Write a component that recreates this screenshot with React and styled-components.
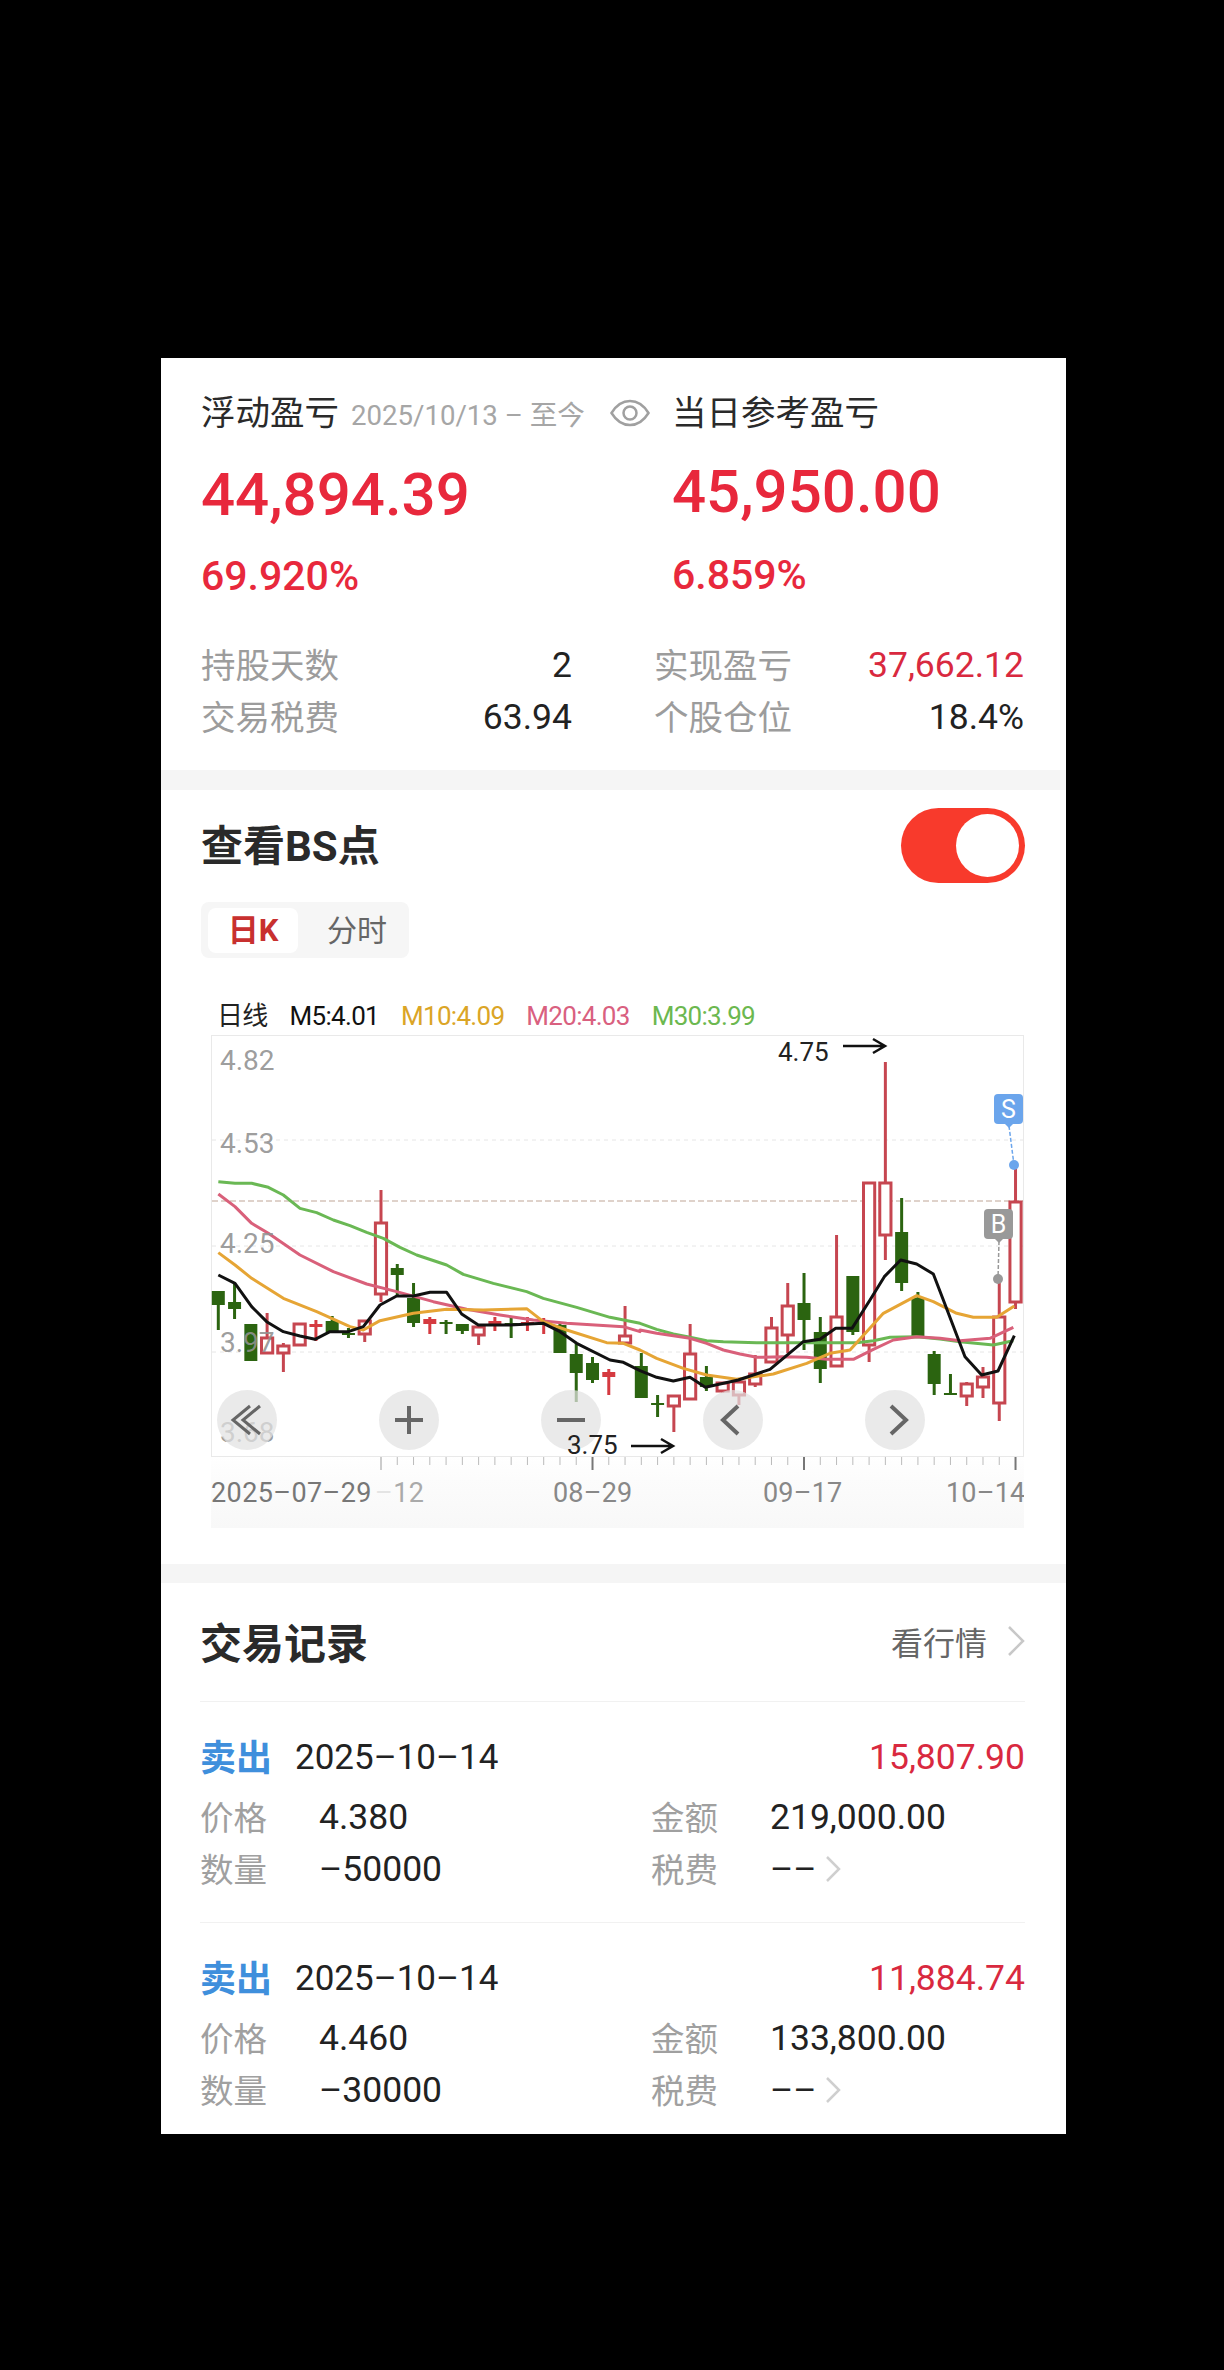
import styled, { createGlobalStyle } from 'styled-components';

const GlobalStyle = createGlobalStyle`
  html, body { margin: 0; padding: 0; background: #000; }
  * { box-sizing: border-box; }
`;

const FONT = `Roboto, "Noto Sans CJK SC", sans-serif`;
const RED = '#e8283c';

const Page = styled.div`
  min-height: 2370px;
  background: #000;
  padding: 358px 0 0 161px;
  font-family: ${FONT};
`;

const Panel = styled.div`
  width: 905px;
  height: 1776px;
  background: #fff;
  display: flex;
  flex-direction: column;
`;

const Section = styled.section`
  padding: ${({ $top }) => $top}px 41px ${({ $bottom }) => $bottom}px ${({ $left }) => $left || 40}px;
`;

const Gap = styled.div`
  height: ${({ $h }) => $h}px;
  background: #f5f5f5;
`;

const SummaryGrid = styled.div`
  display: grid;
  grid-template-columns: 471px 1fr;
`;

const HeadCell = styled.div`
  display: flex;
  align-items: center;
  height: 40px;
`;

const HeadTitle = styled.span`
  font-size: 34.5px;
  line-height: 40px;
  color: #2a2a2a;
  white-space: nowrap;
`;

const DateRange = styled.span`
  font-size: 27.6px;
  line-height: 40px;
  color: #a6a6a6;
  margin: 5px 0 0 12px;
  white-space: nowrap;
`;

const EyeIcon = styled.svg`
  width: 40px;
  height: 28px;
  margin-left: 25px;
  flex: none;
`;

const BigNumber = styled.div`
  font-size: 60px;
  font-weight: 500;
  line-height: 70px;
  color: ${RED};
  margin-top: ${({ $raised }) => ($raised ? 24 : 27)}px;
`;

const Percent = styled.div`
  font-size: 41px;
  font-weight: 500;
  line-height: 50px;
  color: ${RED};
  margin-top: ${({ $raised }) => ($raised ? 23 : 21)}px;
`;

const StatsGrid = styled.div`
  display: grid;
  grid-template-columns: 371px 370px;
  column-gap: 82px;
  margin-top: 38px;
`;

const StatRow = styled.div`
  display: flex;
  justify-content: space-between;
  align-items: center;
  height: 52px;
`;

const StatLabel = styled.span`
  font-size: 34.5px;
  color: #9c9c9c;
  margin-bottom: 4px;
`;

const StatValue = styled.span`
  font-size: 35.5px;
  color: ${({ $red }) => ($red ? '#d9293f' : '#222')};
`;

const SectionHead = styled.div`
  display: flex;
  justify-content: space-between;
  align-items: center;
  height: ${({ $h }) => $h}px;
`;

const SectionTitle = styled.h2`
  margin: 0 0 6px;
  font-size: 42px;
  font-weight: 700;
  color: #2a2a2a;
`;

const Toggle = styled.div`
  width: 124px;
  height: 75px;
  border-radius: 38px;
  background: #f83a2c;
  display: flex;
  align-items: center;
  justify-content: flex-end;
  padding-right: 6px;
`;

const Knob = styled.div`
  width: 63px;
  height: 63px;
  border-radius: 50%;
  background: #fff;
`;

const Tabs = styled.div`
  display: flex;
  align-items: center;
  width: 208px;
  height: 56px;
  margin-top: 19px;
  padding: 0 0 0 7px;
  border-radius: 8px;
  background: #f6f6f6;
`;

const Tab = styled.div`
  width: ${({ $active }) => ($active ? 90 : 102)}px;
  height: 45px;
  margin-left: ${({ $active }) => ($active ? 0 : 8)}px;
  line-height: 45px;
  text-align: center;
  border-radius: 8px;
  font-size: ${({ $active }) => ($active ? 31 : 30)}px;
  font-weight: ${({ $active }) => ($active ? 700 : 400)};
  background: ${({ $active }) => ($active ? '#fff' : 'transparent')};
  color: ${({ $active }) => ($active ? '#c8302f' : '#666')};
`;

const Legend = styled.div`
  display: flex;
  gap: 22px;
  height: 34px;
  line-height: 34px;
  margin: 41px 0 0 16px;
  font-size: 26px;
  letter-spacing: -0.7px;
`;

const LegendItem = styled.span`
  color: ${({ $color }) => $color};
`;

const ChartWrap = styled.div`
  position: relative;
  width: 813px;
  height: 493px;
  margin: 2px 0 0 10px;
  background: linear-gradient(#fff 85%, #fcfcfc 90%, #f8f8f8);
`;

const ChartSvg = styled.svg`
  position: absolute;
  inset: 0;
  display: block;
`;

const ChartButtons = styled.div`
  position: absolute;
  left: 6px;
  top: 355px;
  display: flex;
  gap: 102px;
`;

const RoundButton = styled.div`
  width: 60px;
  height: 60px;
  border-radius: 50%;
  background: rgba(226, 226, 226, 0.72);
  svg { display: block; }
`;

const MoreLink = styled.div`
  display: flex;
  align-items: center;
  gap: 20px;
  font-size: 32px;
  color: #666;
  margin-bottom: 4px;
`;

const Chevron = styled.svg`
  width: ${({ $w }) => $w}px;
  height: ${({ $h }) => $h}px;
  flex: none;
`;

const HeadSpacer = styled.div`
  height: 33px;
`;

const Trade = styled.div`
  border-top: 1px solid #f1f1f1;
  padding: 35px 0 ${({ $bottom }) => $bottom}px;
`;

const TradeHead = styled.div`
  display: flex;
  align-items: center;
  height: 40px;
  margin-bottom: 14px;
`;

const Side = styled.span`
  font-size: 36px;
  font-weight: 700;
  color: #3f8fdc;
  margin-bottom: 5px;
`;

const TradeDate = styled.span`
  font-size: 35px;
  color: #222;
  margin-left: 23px;
`;

const Profit = styled.span`
  font-size: 35.5px;
  color: #d9293f;
  margin-left: auto;
`;

const Fields = styled.div`
  display: grid;
  grid-template-columns: 451px 1fr;
`;

const Field = styled.div`
  display: flex;
  align-items: center;
  height: 52px;
`;

const FieldLabel = styled.span`
  width: 119px;
  font-size: 33.5px;
  color: #a0a0a0;
  margin-bottom: 4px;
`;

const FieldValue = styled.span`
  font-size: 35.5px;
  color: #222;
`;

const MoreChevron = styled(Chevron)`
  margin-left: 8px;
`;

// --- chart data, in the picture's own pixels ---
const xOf = (i) => 218.3 + 16.27 * i;
const top = (pts) => pts.map(([x, y]) => [200 + x / 3, 1030 + y / 3]);
const low = (pts) => pts.map(([x, y]) => [200 + x / 3, 1300 + y / 3]);
const rTop = (pts) => pts.map(([x, y]) => [640 + x / 3, 1030 + y / 3]);
const rLow = (pts) => pts.map(([x, y]) => [640 + x / 3, 1300 + y / 3]);

// kind, body top, body bottom, wick top, wick bottom
const CANDLES = [
  ['g', 1291, 1305, 1291, 1330], ['g', 1302, 1309, 1283, 1319], ['g', 1324, 1361, 1324, 1361],
  ['r', 1338, 1353, 1313, 1353], ['r', 1346, 1353, 1343, 1372], ['r', 1324, 1345, 1324, 1345],
  ['f', 1324, 1327, 1320, 1341], ['g', 1321, 1332, 1316, 1332], ['g', 1333, 1335, 1328, 1338],
  ['r', 1321, 1334, 1321, 1342], ['r', 1223, 1294, 1190, 1302], ['g', 1268, 1275, 1264, 1297],
  ['g', 1298, 1323, 1283, 1327], ['f', 1319, 1324, 1317, 1334], ['g', 1322, 1323, 1320, 1334],
  ['g', 1324, 1331, 1324, 1334], ['r', 1327, 1335, 1325, 1345], ['f', 1321, 1324, 1317, 1331],
  ['g', 1323, 1324, 1318, 1338], ['f', 1322, 1323, 1317, 1331], ['f', 1323, 1324, 1318, 1334],
  ['g', 1325, 1353, 1322, 1353], ['g', 1354, 1373, 1343, 1402], ['g', 1363, 1380, 1357, 1383],
  ['f', 1372, 1377, 1369, 1395], ['r', 1336, 1343, 1306, 1343], ['g', 1366, 1398, 1353, 1398],
  ['g', 1403, 1405, 1395, 1417], ['r', 1396, 1406, 1396, 1432], ['r', 1354, 1399, 1324, 1399],
  ['g', 1377, 1387, 1366, 1391], ['r', 1383, 1391, 1382, 1393], ['r', 1382, 1395, 1382, 1405],
  ['r', 1374, 1384, 1355, 1387], ['r', 1328, 1362, 1317, 1362], ['r', 1306, 1335, 1283, 1353],
  ['g', 1303, 1320, 1273, 1350], ['g', 1332, 1369, 1317, 1383], ['r', 1317, 1366, 1235, 1366],
  ['g', 1276, 1332, 1276, 1335], ['r', 1183, 1345, 1183, 1362], ['r', 1183, 1235, 1062, 1260],
  ['g', 1232, 1283, 1198, 1291], ['g', 1298, 1336, 1292, 1336], ['g', 1354, 1384, 1351, 1395],
  ['g', 1393, 1395, 1374, 1395], ['r', 1384, 1396, 1382, 1406], ['r', 1377, 1387, 1367, 1398],
  ['r', 1317, 1403, 1280, 1421], ['r', 1202, 1302, 1165, 1309],
];

const LINES = [
  {
    color: '#6ab854',
    pts: [
      ...top([[55, 455], [105, 460], [155, 460], [205, 472], [250, 495], [300, 535], [350, 548], [400, 570], [450, 587], [500, 607], [550, 625], [600, 652], [650, 675], [740, 705], [790, 733], [880, 760], [980, 785], [1030, 805], [1130, 832], [1230, 862], [1320, 880]]),
      ...rLow([[0, 70], [50, 88], [100, 102], [150, 112], [200, 122], [250, 125], [350, 128], [500, 128], [650, 128], [700, 122], [750, 112], [830, 110], [900, 117], [960, 125], [1060, 135], [1120, 122]]),
    ],
  },
  {
    color: '#d9607a',
    pts: [
      ...top([[55, 492], [105, 530], [155, 580], [205, 610], [300, 675], [400, 725], [500, 762], [590, 785], [700, 815], [800, 838], [900, 855], [1000, 870], [1100, 880], [1270, 890], [1320, 905]]),
      ...rLow([[0, 90], [50, 100], [150, 115], [200, 130], [250, 150], [300, 162], [350, 172], [430, 170], [500, 172], [560, 178], [640, 178], [700, 148], [760, 120], [830, 110], [900, 115], [960, 122], [1050, 115], [1120, 82]]),
    ],
  },
  {
    color: '#e6a535',
    pts: [
      ...top([[55, 668], [105, 705], [155, 745], [250, 805], [350, 845], [450, 890]]),
      ...low([[490, 90], [540, 62], [640, 40], [740, 28], [850, 30], [980, 26], [1030, 65], [1100, 90], [1220, 128], [1270, 130], [1320, 150]]),
      ...rLow([[50, 175], [130, 205], [200, 225], [290, 238], [400, 222], [500, 190], [570, 160], [630, 150], [680, 95], [730, 40]]),
      ...rTop([[830, 797], [880, 815], [950, 850], [1000, 862], [1070, 862], [1123, 828]]),
    ],
  },
  {
    color: '#111',
    pts: [
      ...top([[55, 735], [105, 760], [155, 830], [200, 875]]),
      ...low([[250, 95], [300, 108], [345, 118], [390, 95], [445, 95], [490, 80], [540, 15]]),
      ...top([[590, 798], [640, 798], [690, 787], [740, 787], [785, 852], [835, 885], [930, 885], [1030, 880]]),
      ...low([[1080, 95], [1130, 130], [1230, 180], [1270, 187], [1320, 212]]),
      ...rLow([[50, 232], [100, 243], [150, 232], [196, 262], [295, 240], [390, 208], [490, 125], [540, 118], [587, 85], [636, 85], [690, 0]]),
      ...rTop([[733, 740], [782, 690], [830, 702], [880, 732]]),
      ...rLow([[910, 0], [975, 170], [1025, 225], [1074, 213], [1123, 107]]),
    ],
  },
];

const VIEW = '211 1035 813 493';
const AXIS = [['4.82', 1060], ['4.53', 1143], ['4.25', 1243], ['3.97', 1342], ['3.68', 1432]];
const GRID = [1140, 1246, 1352];
const DATES = [['08–29', 553], ['09–17', 763], ['10–14', 946]];

const Candle = ({ i, kind, bodyTop, bodyBot, wickTop, wickBot }) => {
  const x = xOf(i);
  const color = kind === 'g' ? '#2b6410' : kind === 'f' ? '#d53a40' : '#c64650';
  const hollow = kind === 'r';
  return (
    <g>
      <line x1={x} x2={x} y1={wickTop} y2={wickBot} stroke={color} strokeWidth="3" />
      <rect
        x={x - (hollow ? 5.6 : 6.5)}
        y={bodyTop}
        width={hollow ? 11.2 : 13}
        height={Math.max(bodyBot - bodyTop, 2)}
        fill={hollow ? '#fff' : color}
        stroke={hollow ? color : 'none'}
        strokeWidth={hollow ? 3 : 0}
      />
    </g>
  );
};

const Badge = ({ x, y, label, color, tipX, tipY }) => (
  <g>
    <line x1={x + 15} y1={y + 32} x2={tipX} y2={tipY} stroke={color} strokeWidth="1.5" strokeDasharray="4 2" />
    <circle cx={tipX} cy={tipY} r="5" fill={color} />
    <rect x={x} y={y} width="29" height="30" rx="4" fill={color} />
    <path d={`M${x + 11} ${y + 30}L${x + 15} ${y + 34}L${x + 19} ${y + 30}Z`} fill={color} />
    <text x={x + 14.5} y={y + 24} textAnchor="middle" fontSize="25" fill="#fff" fontFamily={FONT}>{label}</text>
  </g>
);

const Chart = () => (
  <ChartWrap>
    <ChartSvg width="813" height="493" viewBox={VIEW}>
      <rect x="211.5" y="1035.5" width="812" height="421" fill="#fff" stroke="#e9e9e9" />
      {GRID.map((y) => (
        <line key={y} x1="212" x2="1023" y1={y} y2={y} stroke="#e6e6e6" strokeDasharray="4 4" />
      ))}
      <line x1="212" x2="1023" y1="1201" y2="1201" stroke="#bfa596" strokeDasharray="6 3" />
      {CANDLES.map(([kind, bodyTop, bodyBot, wickTop, wickBot], i) => (
        <Candle key={i} i={i} kind={kind} bodyTop={bodyTop} bodyBot={bodyBot} wickTop={wickTop} wickBot={wickBot} />
      ))}
      {LINES.map(({ color, pts }) => (
        <polyline
          key={color}
          points={pts.map((p) => p.join(',')).join(' ')}
          fill="none"
          stroke={color}
          strokeWidth="3"
          strokeLinejoin="round"
        />
      ))}
      {AXIS.map(([label, y]) => (
        <text key={label} x="220" y={y + 10} fontSize="28" fill="#919191" fillOpacity="0.9" fontFamily={FONT}>{label}</text>
      ))}
      <Badge x={994} y={1094} label="S" color="#6ba5ec" tipX={1014} tipY={1165} />
      <Badge x={984} y={1209} label="B" color="#999" tipX={998} tipY={1279} />
      {CANDLES.map((_, i) => {
        if (i < 10) return null;
        const major = (i - 10) % 13 === 0;
        return (
          <line
            key={i}
            x1={xOf(i)}
            x2={xOf(i)}
            y1="1457"
            y2={major ? 1470 : 1465}
            stroke={i === 10 ? '#ccc' : major ? '#777' : '#bbb'}
            strokeWidth={major ? 2 : 1}
          />
        );
      })}
      <text x="211" y="1502" fontSize="27" fill="#777" fontFamily={FONT} letterSpacing="0.4">2025–07–29</text>
      <text x="375" y="1502" fontSize="27" fill="#aaa" fontFamily={FONT} letterSpacing="0.4"><tspan fill="#e4e4e4">–</tspan>12</text>
      {DATES.map(([label, x]) => (
        <text key={label} x={x} y="1502" fontSize="27" fill="#888" fontFamily={FONT} letterSpacing="0.2">{label}</text>
      ))}
    </ChartSvg>
    <ChartButtons>
      <RoundButton>
        <svg width="60" height="60" fill="none" stroke="#666" strokeWidth="3">
          <path d="M33 16L16 30L33 44M43 16L26 30L43 44" />
        </svg>
      </RoundButton>
      <RoundButton>
        <svg width="60" height="60" fill="none" stroke="#666" strokeWidth="4">
          <path d="M16 30H44M30 16V44" />
        </svg>
      </RoundButton>
      <RoundButton>
        <svg width="60" height="60" fill="none" stroke="#666" strokeWidth="4">
          <path d="M16 30H44" />
        </svg>
      </RoundButton>
      <RoundButton>
        <svg width="60" height="60" fill="none" stroke="#666" strokeWidth="4">
          <path d="M35 16L20 30L35 44" />
        </svg>
      </RoundButton>
      <RoundButton>
        <svg width="60" height="60" fill="none" stroke="#666" strokeWidth="4">
          <path d="M26 16L41 30L26 44" />
        </svg>
      </RoundButton>
    </ChartButtons>
    <ChartSvg width="813" height="493" viewBox={VIEW}>
      <text x="778" y="1061" fontSize="26" fill="#222" fontFamily={FONT}>4.75</text>
      <path d="M843 1046H885M873 1039L885 1046L873 1053" fill="none" stroke="#111" strokeWidth="2.5" />
      <text x="567" y="1454" fontSize="26" fill="#222" fontFamily={FONT}>3.75</text>
      <path d="M631 1446H673M661 1439L673 1446L661 1453" fill="none" stroke="#111" strokeWidth="2.5" />
    </ChartSvg>
  </ChartWrap>
);

const TRADES = [
  { profit: '15,807.90', price: '4.380', amount: '219,000.00', qty: '–50000', bottom: 27 },
  { profit: '11,884.74', price: '4.460', amount: '133,800.00', qty: '–30000', bottom: 16 },
];

const TradeRow = ({ profit, price, amount, qty, bottom }) => (
  <Trade $bottom={bottom}>
    <TradeHead>
      <Side>卖出</Side>
      <TradeDate>2025–10–14</TradeDate>
      <Profit>{profit}</Profit>
    </TradeHead>
    <Fields>
      <Field>
        <FieldLabel>价格</FieldLabel>
        <FieldValue>{price}</FieldValue>
      </Field>
      <Field>
        <FieldLabel>金额</FieldLabel>
        <FieldValue>{amount}</FieldValue>
      </Field>
      <Field>
        <FieldLabel>数量</FieldLabel>
        <FieldValue>{qty}</FieldValue>
      </Field>
      <Field>
        <FieldLabel>税费</FieldLabel>
        <FieldValue>––</FieldValue>
        <MoreChevron $w={16} $h={28} viewBox="0 0 16 28" fill="none" stroke="#cfcfcf" strokeWidth="2.5">
          <path d="M2 2L14 14L2 26" />
        </MoreChevron>
      </Field>
    </Fields>
  </Trade>
);

const STATS = [
  ['持股天数', '2'],
  ['实现盈亏', '37,662.12', true],
  ['交易税费', '63.94'],
  ['个股仓位', '18.4%'],
];

const App = () => (
  <Page>
    <GlobalStyle />
    <Panel>
      <Section $top={35} $bottom={27}>
        <SummaryGrid>
          <div>
            <HeadCell>
              <HeadTitle>浮动盈亏</HeadTitle>
              <DateRange>2025/10/13 – 至今</DateRange>
              <EyeIcon viewBox="0 0 40 28" fill="none" stroke="#a0a0a0" strokeWidth="2.5">
                <path d="M1.5 14C7 5 13 2 20 2S33 5 38.500 14C33 23 27 26 20 26S7 23 1.500 14Z" />
                <circle cx="20" cy="14" r="6.500" />
              </EyeIcon>
            </HeadCell>
            <BigNumber>44,894.39</BigNumber>
            <Percent>69.920%</Percent>
          </div>
          <div>
            <HeadCell>
              <HeadTitle>当日参考盈亏</HeadTitle>
            </HeadCell>
            <BigNumber $raised>45,950.00</BigNumber>
            <Percent $raised>6.859%</Percent>
          </div>
        </SummaryGrid>
        <StatsGrid>
          {STATS.map(([label, value, red]) => (
            <StatRow key={label}>
              <StatLabel>{label}</StatLabel>
              <StatValue $red={red}>{value}</StatValue>
            </StatRow>
          ))}
        </StatsGrid>
      </Section>
      <Gap $h={20} />
      <Section $top={18} $bottom={36}>
        <SectionHead $h={75}>
          <SectionTitle>查看BS点</SectionTitle>
          <Toggle>
            <Knob />
          </Toggle>
        </SectionHead>
        <Tabs>
          <Tab $active>日K</Tab>
          <Tab>分时</Tab>
        </Tabs>
        <Legend>
          <LegendItem $color="#222">日线</LegendItem>
          <LegendItem $color="#111">M5:4.01</LegendItem>
          <LegendItem $color="#dba526">M10:4.09</LegendItem>
          <LegendItem $color="#d9607f">M20:4.03</LegendItem>
          <LegendItem $color="#6cb84f">M30:3.99</LegendItem>
        </Legend>
        <Chart />
      </Section>
      <Gap $h={19} />
      <Section $top={35} $bottom={0} $left={39}>
        <SectionHead $h={50}>
          <SectionTitle>交易记录</SectionTitle>
          <MoreLink>
            看行情
            <Chevron $w={18} $h={32} viewBox="0 0 18 32" fill="none" stroke="#c8c8c8" strokeWidth="2.500">
              <path d="M2 2L16 16L2 30" />
            </Chevron>
          </MoreLink>
        </SectionHead>
        <HeadSpacer />
        {TRADES.map((t) => (
          <TradeRow key={t.profit} {...t} />
        ))}
      </Section>
    </Panel>
  </Page>
);

export default App;
